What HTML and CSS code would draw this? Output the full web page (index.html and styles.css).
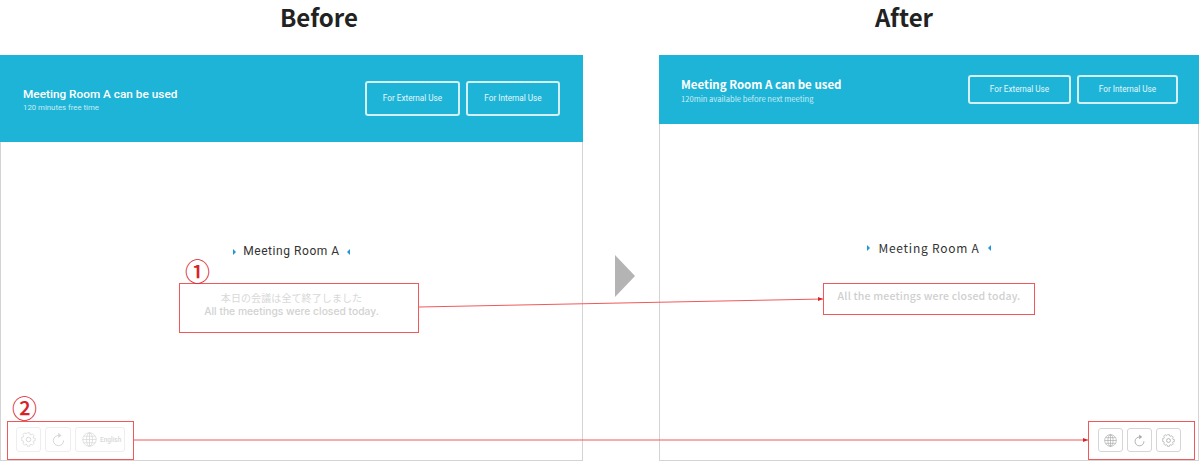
FILE: index.html
```html
<!DOCTYPE html>
<html lang="en">
<head>
<meta charset="utf-8">
<title>Before and After</title>
<link rel="stylesheet" href="styles.css">
</head>
<body>
<main class="figure">
  <section class="col col-before">
    <h2 class="title">Before</h2>
    <div class="panel">
      <header class="bar bar-before">
        <div class="status">
          <div class="status-main">Meeting Room A can be used</div>
          <div class="status-sub">120 minutes free time</div>
        </div>
        <div class="actions">
          <button class="use-btn ext">For External Use</button>
          <button class="use-btn int">For Internal Use</button>
        </div>
      </header>
      <div class="content">
        <div class="room"><span class="tri tri-r"></span><span>Meeting Room A</span><span class="tri tri-l"></span></div>
        <p class="closed-ja">本日の会議は全て終了しました</p>
        <p class="closed-en">All the meetings were closed today.</p>
      </div>
      <footer class="tools">
        <span class="tool faint"><svg class="ico" viewBox="0 0 24 24"><use href="#gear"/></svg></span>
        <span class="tool faint"><svg class="ico" viewBox="0 0 24 24"><use href="#reload"/></svg></span>
        <span class="tool faint wide"><svg class="ico" viewBox="0 0 24 24"><use href="#globe"/></svg><span class="lang">English</span></span>
      </footer>
    </div>
  </section>

  <div class="between"><svg class="big-arrow" viewBox="0 0 20 42"><polygon points="0,0 20,21 0,42"/></svg></div>

  <section class="col col-after">
    <h2 class="title">After</h2>
    <div class="panel">
      <header class="bar bar-after">
        <div class="status">
          <div class="status-main">Meeting Room A can be used</div>
          <div class="status-sub">120min available before next meeting</div>
        </div>
        <div class="actions">
          <button class="use-btn">For External Use</button>
          <button class="use-btn">For Internal Use</button>
        </div>
      </header>
      <div class="content">
        <div class="room"><span class="tri tri-r"></span><span>Meeting Room A</span><span class="tri tri-l"></span></div>
        <p class="closed-one">All the meetings were closed today.</p>
      </div>
      <footer class="tools tools-end">
        <span class="tool"><svg class="ico" viewBox="0 0 24 24"><use href="#globe"/></svg></span>
        <span class="tool"><svg class="ico" viewBox="0 0 24 24"><use href="#reload"/></svg></span>
        <span class="tool"><svg class="ico" viewBox="0 0 24 24"><use href="#gear"/></svg></span>
      </footer>
    </div>
  </section>

  <div class="mark mark-1"></div>
  <div class="mark mark-2"></div>
  <div class="mark mark-3"></div>
  <div class="mark mark-4"></div>
  <span class="num num-1">①</span>
  <span class="num num-2">②</span>
  <svg class="links" viewBox="0 0 1199 461">
    <line x1="419" y1="307" x2="823" y2="299"/>
    <polygon points="823,299 818,297 818,301"/>
    <line x1="134" y1="440" x2="1088" y2="440"/>
    <polygon points="1088,440 1083,438 1083,442"/>
  </svg>
</main>

<svg class="defs" width="0" height="0">
  <defs>
    <g id="gear" fill="none" stroke="currentColor" stroke-width="1.5" stroke-linejoin="round">
      <path d="M9.8 1.5h4.4l.6 3 2.2.9 2.5-1.7 3.1 3.1-1.7 2.5.9 2.2 3 .6v4.4l-3 .6-.9 2.2 1.7 2.5-3.1 3.1-2.5-1.7-2.2.9-.6 3H9.8l-.6-3-2.2-.9-2.5 1.7-3.1-3.1 1.7-2.5-.9-2.2-3-.6V9.8l3-.6.9-2.2-1.7-2.5 3.1-3.1 2.5 1.7 2.2-.9z" transform="translate(12 12) scale(.84) translate(-12 -14.2)"/>
      <circle cx="12" cy="12" r="3.6"/>
    </g>
    <g id="reload" fill="none" stroke="currentColor" stroke-width="1.6">
      <path d="M12.5 5.5A8.2 8.2 0 1 0 20.2 13.5"/>
      <path d="M11.5 1l5.5 4.500-5.500 4z" fill="currentColor" stroke="none"/>
    </g>
    <g id="globe" fill="none" stroke="currentColor" stroke-width="1.2">
      <circle cx="12" cy="12" r="10.8"/>
      <ellipse cx="12" cy="12" rx="4.8" ry="10.8"/>
      <path d="M12 1.2v21.600M1.200 12h21.600M3 6.800h18M3 17.200h18"/>
    </g>
  </defs>
</svg>
</body>
</html>
```
FILE: styles.css
```css
* { box-sizing: border-box; }
html, body { margin: 0; padding: 0; background: #fff; }
body { width: 1199px; height: 461px; overflow: hidden; font-family: "Roboto", "Liberation Sans", sans-serif; }

.figure { position: relative; display: flex; width: 1199px; height: 461px; }
.col { display: flex; flex-direction: column; }
.col-before { width: 583px; }
.col-after { width: 540px; }
.between { width: 76px; padding: 255px 0 0 32px; }
.big-arrow { display: block; width: 20px; height: 42px; fill: #b4b4b4; }

.title {
  height: 55px; margin: 0;
  color: #222;
  font: 700 24px/34px "Noto Sans CJK JP", "Noto Sans", sans-serif;
}
.col-before .title { padding-left: 280px; }
.col-after .title { padding-left: 216px; }

.panel {
  flex: 1; display: flex; flex-direction: column;
  border: 1px solid #d4d4d4; border-top: 0; border-radius: 2px 2px 0 0;
}
.bar { display: flex; align-items: center; justify-content: space-between; background: #1eb4d7; color: #fff; margin: 0 -1px; }
.bar-before { height: 87px; padding: 0 23px; }
.bar-after { height: 69px; padding: 0 21px 0 22px; }

.status { margin-top: 2px; }
.status-main { font-size: 11.8px; font-weight: 500; line-height: 15px; }
.status-sub { font-size: 7.8px; line-height: 11px; color: #c9edf5; }
.bar-after .status { font-family: "Noto Sans CJK JP", "Noto Sans", sans-serif; margin-top: 0; }
.bar-after .status-main { font-size: 11.5px; font-weight: 700; line-height: 18px; }
.bar-after .status-sub { font-size: 7.6px; line-height: 12px; font-weight: 400; color: #c9edf5; }

.actions { display: flex; gap: 6px; }
.use-btn {
  height: 35px; padding: 0; background: transparent; color: #e6f7fb;
  border: 2px solid #d2f0f6; border-radius: 3px;
  font: 400 8.2px/1 "Roboto", "Liberation Sans", sans-serif;
}
.bar-before .ext { width: 95px; }
.bar-before .int { width: 94px; }
.bar-after .use-btn { width: 103px; height: 29px; }
.bar-after .use-btn + .use-btn { width: 101px; }
.bar-after .actions { margin-top: -1px; }

.content { display: flex; flex-direction: column; align-items: center; }
.col-before .content { padding-top: 101px; }
.col-after .content { padding-top: 115px; }

.room { display: flex; align-items: center; gap: 7px; font-size: 12px; letter-spacing: .55px; line-height: 17px; color: #333; }
.col-after .room { font-family: "Noto Sans CJK JP", "Noto Sans", sans-serif; letter-spacing: .75px; font-size: 12px; gap: 8px; }
.tri { width: 0; height: 0; border-style: solid; border-color: transparent; border-width: 3px 0 3px 3px; border-left-color: #2196d8; }
.tri-l { border-width: 3px 3px 3px 0; border-right-color: #2196d8; }

.closed-ja { margin: 31px 0 0; font: 400 10px/13px "Noto Sans CJK JP", sans-serif; color: #d8d8d8; letter-spacing: .1px; }
.closed-en { margin: 0; font: 500 10.3px/14px "Inter", "Liberation Sans", sans-serif; color: #d2d2d2; }
.closed-one { margin: 32px 0 0; font: 500 10.5px/16px "Noto Sans CJK JP", sans-serif; color: #cfcfcf; letter-spacing: .18px; }

.tools { margin-top: auto; display: flex; gap: 4px; padding: 0 0 8px 15px; }
.tools-end { justify-content: flex-end; padding: 0 17px 8px 0; }
.tool {
  display: flex; align-items: center; justify-content: center;
  width: 25px; height: 24px; border: 1px solid #d6d6d6; border-radius: 3px; color: #a8a8a8;
}
.tool.faint { border-color: #eeeeee; color: #d8d8d8; height: 25px; }
.tool.faint + .tool.faint { width: 26px; }
.tool.faint + .tool.faint + .tool.wide { width: 50px; justify-content: flex-start; padding-left: 6px; gap: 3px; }
.tool.faint .ico { width: 15px; height: 15px; }
.ico { width: 13px; height: 13px; display: block; }
.lang { font-size: 6.5px; font-weight: 500; color: #d8d8d8; }

.mark { position: absolute; border: 1.5px solid #f0595c; }
.mark-1 { left: 179px; top: 283px; width: 240px; height: 50px; }
.mark-2 { left: 823px; top: 283px; width: 212px; height: 32px; }
.mark-3 { left: 7px; top: 421px; width: 127px; height: 39px; }
.mark-4 { left: 1088px; top: 421px; width: 107px; height: 39px; }

.num { position: absolute; color: #d8222a; font: 500 25px/25px "Noto Sans CJK JP", sans-serif; width: 25px; text-align: center; }
.num-1 { left: 185px; top: 258px; }
.num-2 { left: 12px; top: 395px; }

.links { position: absolute; left: 0; top: 0; width: 1199px; height: 461px; pointer-events: none; }
.links line { stroke: #f0595c; stroke-width: 1; }
.links polygon { fill: #d8222a; }
.defs { position: absolute; }
```
